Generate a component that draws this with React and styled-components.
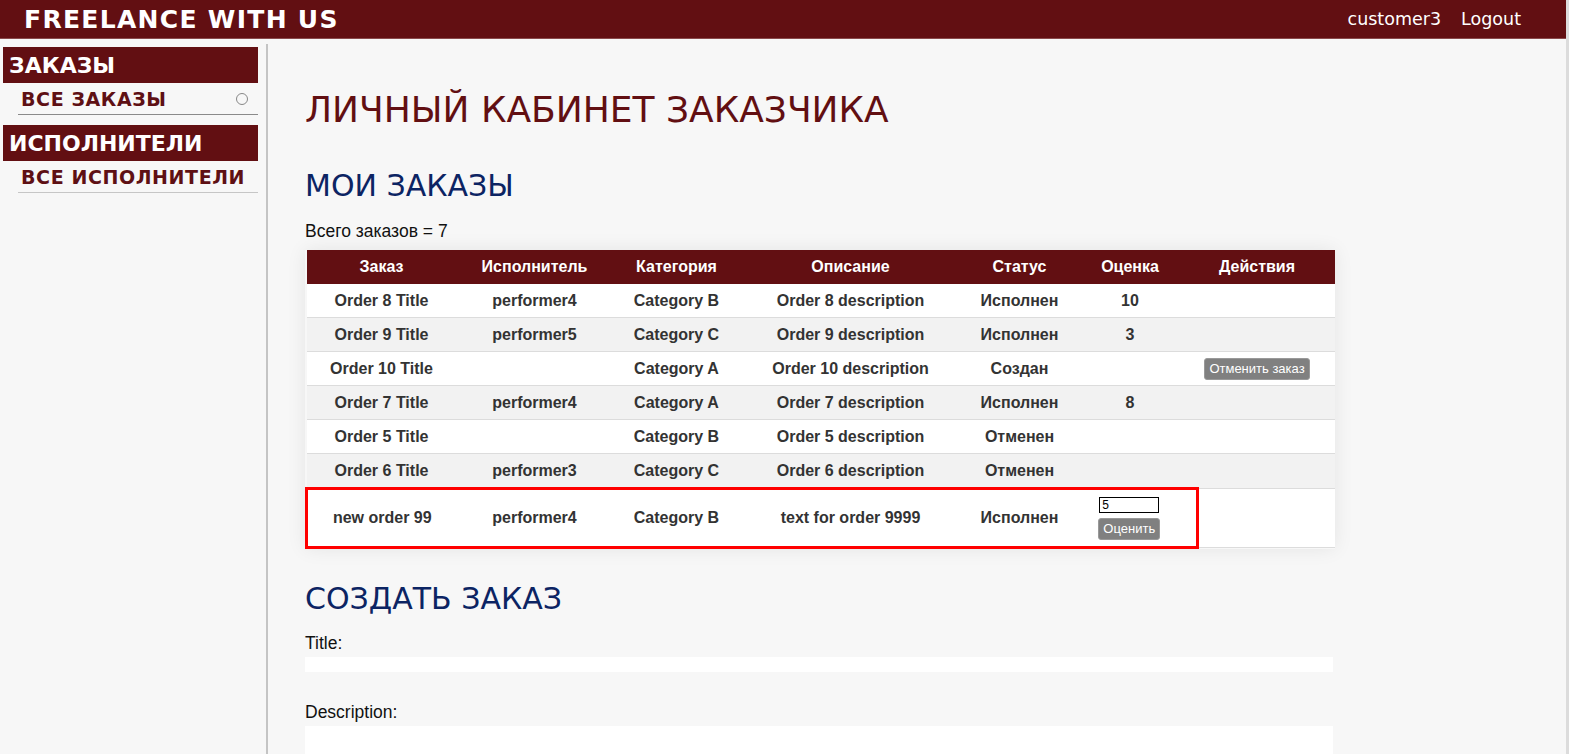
import React from "react";
import styled, {createGlobalStyle} from "styled-components";

const GlobalStyle = createGlobalStyle`
  html, body {
    margin: 0;
    padding: 0;
    background: #f7f7f7;
    font-family: "Liberation Sans", Arial, sans-serif;
    overflow: hidden;
  }
`;

const Page = styled.div`
  height: 754px;
  display: flex;
  flex-direction: column;
  border-right: 3px solid #dcdcdc;
`;

const Header = styled.header`
  height: 38px;
  flex-shrink: 0;
  background: #620f12;
  border-bottom: 1px solid #8a4a4c;
  display: flex;
  align-items: center;
  justify-content: space-between;
  padding: 0 45px 0 24px;
`;

const Brand = styled.div`
  font-family: "DejaVu Sans", Verdana, sans-serif;
  font-weight: bold;
  font-size: 25px;
  letter-spacing: 1.3px;
  color: #fff;
`;

const UserBox = styled.div`
  display: flex;
  gap: 20px;
  font-family: "DejaVu Sans", Verdana, sans-serif;
  font-size: 17.5px;
  color: #fff;
`;

const Body = styled.div`
  flex: 1;
  display: flex;
  min-height: 0;
`;

const Sidebar = styled.nav`
  width: 255px;
  padding: 3px 8px 0 3px;
  margin-top: 5px;
  border-right: 2px solid #c4c4c4;
  flex-shrink: 0;
`;

const Group = styled.div`
  margin-bottom: 10px;
`;

const GroupTitle = styled.div`
  background: #620f12;
  color: #fff;
  font-family: "DejaVu Sans", Verdana, sans-serif;
  font-weight: bold;
  font-size: 22px;
  height: 36px;
  line-height: 38px;
  padding-left: 6px;
`;

const NavLink = styled.div`
  margin-left: 15px;
  padding: 0 3px;
  height: 31px;
  line-height: 30px;
  border-bottom: ${p => (p.$dark ? "1.5px solid #8a8a8a" : "1px solid #c6c6c6")};
  display: flex;
  justify-content: space-between;
  align-items: center;
  font-family: "DejaVu Sans", Verdana, sans-serif;
  font-weight: bold;
  font-size: 19px;
  letter-spacing: 0.6px;
  color: #5e1014;
`;

const Circle = styled.span`
  width: 10px;
  height: 10px;
  border: 1.5px solid #888;
  border-radius: 50%;
  margin-right: 7px;
`;

const Main = styled.main`
  flex: 1;
  padding-left: 37px;
  padding-top: 50px;
`;

const Title = styled.h1`
  margin: 0 0 38px;
  font-family: "DejaVu Sans", Verdana, sans-serif;
  font-weight: normal;
  font-size: 36px;
  color: #620f12;
`;

const SubTitle = styled.h2`
  margin: ${p => p.$mt || 0}px 0 ${p => p.$mb || 14}px;
  font-family: "DejaVu Sans", Verdana, sans-serif;
  font-weight: normal;
  font-size: 30px;
  color: #0c2463;
`;

const Count = styled.div`
  font-size: 17.5px;
  color: #111;
  margin-bottom: 8px;
`;

const Table = styled.table`
  width: 1028px;
  border-collapse: collapse;
  box-shadow: 0 0 18px rgba(0, 0, 0, 0.08);
  table-layout: fixed;
`;

const Th = styled.th`
  background: #620f12;
  color: #fff;
  font-size: 16px;
  font-weight: bold;
  height: 34px;
  padding: 0 ${p => p.$pr || 0}px 0 0;
  text-align: center;
`;

const Tr = styled.tr`
  background: ${p => (p.$alt ? "#f2f2f2" : "#fff")};
  border-bottom: 1px solid #dcdcdc;
`;

const Td = styled.td`
  height: ${p => (p.$tall ? 56 : 33)}px;
  padding: 0 ${p => p.$pr || 0}px 0 0;
  text-align: center;
  font-size: 16px;
  font-weight: bold;
  color: #333;
  ${p => p.$mark && `
    border-top: 3px solid #ff0000;
    border-bottom: 3px solid #ff0000;
  `}
  ${p => p.$markLeft && "border-left: 3px solid #ff0000;"}
  ${p => p.$markRight && "border-right: 3px solid #ff0000;"}
`;

const SmallButton = styled.button`
  background: #808080;
  color: #fff;
  border: 1px solid #999;
  border-radius: 3px;
  font-family: "Liberation Sans", Arial, sans-serif;
  font-size: 13px;
  height: 22px;
  padding: 0 4px;
`;

const RateBox = styled.div`
  display: flex;
  flex-direction: column;
  align-items: center;
  gap: 5px;
`;

const RateInput = styled.input`
  width: 54px;
  height: 12px;
  border: 1px solid #000;
  padding: 1px 2px;
  font-size: 12px;
  font-family: "Liberation Sans", Arial, sans-serif;
  margin: 0;
`;

const Label = styled.div`
  font-size: 17.5px;
  color: #111;
  margin-bottom: 3px;
`;

const Field = styled.div`
  width: 1028px;
  height: ${p => p.$h}px;
  background: #fff;
  margin-bottom: ${p => p.$mb || 0}px;
`;

const cols = [150, 156, 128, 220, 118, 119, 137];

const orders = [
  ["Order 8 Title", "performer4", "Category B", "Order 8 description", "Исполнен", "10", null],
  ["Order 9 Title", "performer5", "Category C", "Order 9 description", "Исполнен", "3", null],
  ["Order 10 Title", "", "Category A", "Order 10 description", "Создан", "", "cancel"],
  ["Order 7 Title", "performer4", "Category A", "Order 7 description", "Исполнен", "8", null],
  ["Order 5 Title", "", "Category B", "Order 5 description", "Отменен", "", null],
  ["Order 6 Title", "performer3", "Category C", "Order 6 description", "Отменен", "", null],
];

const App = () => {
  return (
    <Page>
      <GlobalStyle/>
      <Header>
        <Brand>FREELANCE WITH US</Brand>
        <UserBox>
          <span>customer3</span>
          <span>Logout</span>
        </UserBox>
      </Header>
      <Body>
        <Sidebar>
          <Group>
            <GroupTitle>ЗАКАЗЫ</GroupTitle>
            <NavLink $dark>ВСЕ ЗАКАЗЫ <Circle/></NavLink>
          </Group>
          <Group>
            <GroupTitle>ИСПОЛНИТЕЛИ</GroupTitle>
            <NavLink>ВСЕ ИСПОЛНИТЕЛИ</NavLink>
          </Group>
        </Sidebar>
        <Main>
          <Title>ЛИЧНЫЙ КАБИНЕТ ЗАКАЗЧИКА</Title>
          <SubTitle $mb={18}>МОИ ЗАКАЗЫ</SubTitle>
          <Count>Всего заказов = 7</Count>
          <Table>
            <colgroup>
              {cols.map((w, i) => <col key={i} style={{width: w}}/>)}
            </colgroup>
            <thead>
              <tr>
                <Th>Заказ</Th>
                <Th>Исполнитель</Th>
                <Th>Категория</Th>
                <Th>Описание</Th>
                <Th>Статус</Th>
                <Th $pr={16}>Оценка</Th>
                <Th $pr={18}>Действия</Th>
              </tr>
            </thead>
            <tbody>
              {orders.map((o, i) => (
                <Tr key={i} $alt={i % 2 === 1}>
                  <Td>{o[0]}</Td>
                  <Td>{o[1]}</Td>
                  <Td>{o[2]}</Td>
                  <Td>{o[3]}</Td>
                  <Td>{o[4]}</Td>
                  <Td $pr={16}>{o[5]}</Td>
                  <Td $pr={18}>{o[6] && <SmallButton>Отменить заказ</SmallButton>}</Td>
                </Tr>
              ))}
              <Tr>
                <Td $tall $mark $markLeft>new order 99</Td>
                <Td $mark>performer4</Td>
                <Td $mark>Category B</Td>
                <Td $mark>text for order 9999</Td>
                <Td $mark>Исполнен</Td>
                <Td $mark $markRight $pr={16}>
                  <RateBox>
                    <RateInput defaultValue="5"/>
                    <SmallButton>Оценить</SmallButton>
                  </RateBox>
                </Td>
                <Td/>
              </Tr>
            </tbody>
          </Table>
          <SubTitle $mt={32} $mb={17}>СОЗДАТЬ ЗАКАЗ</SubTitle>
          <Label>Title:</Label>
          <Field $h={15} $mb={30}/>
          <Label>Description:</Label>
          <Field $h={60}/>
        </Main>
      </Body>
    </Page>
  );
};

export default App;
